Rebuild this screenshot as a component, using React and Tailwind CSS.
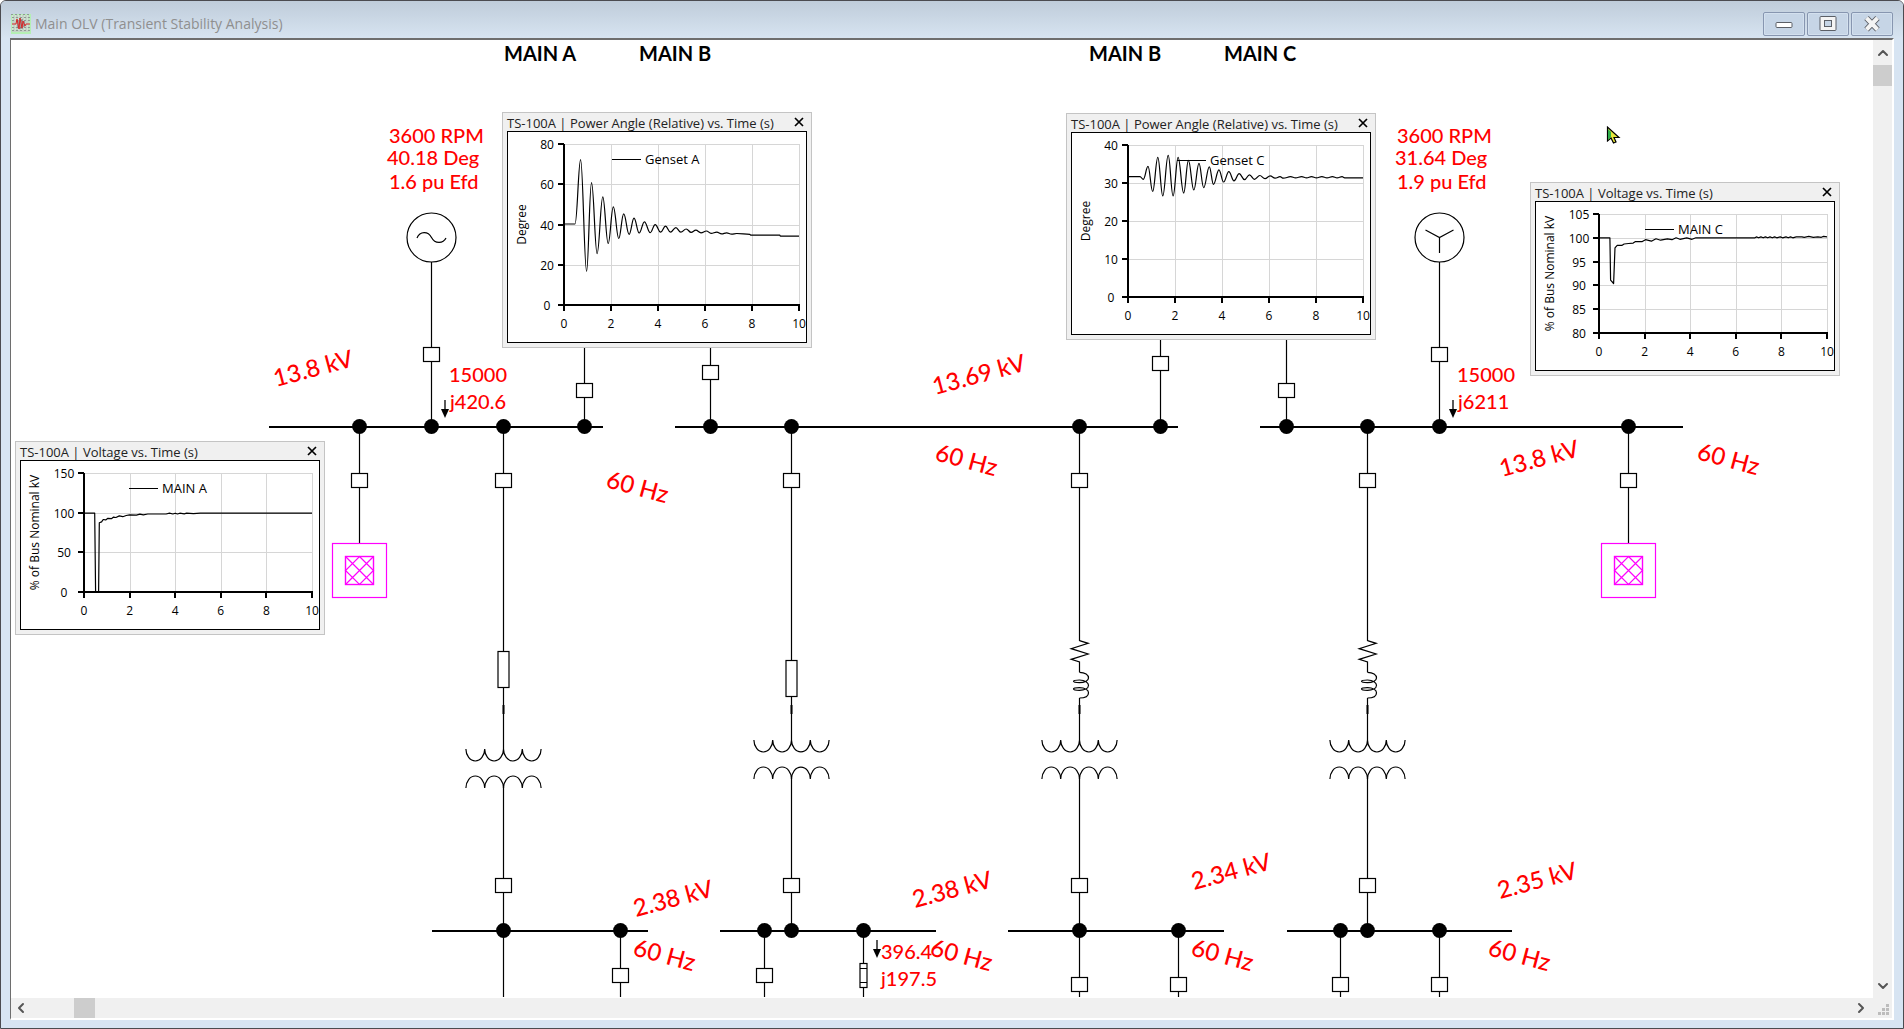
import { ChevronUp, ChevronDown, ChevronLeft, ChevronRight } from 'lucide-react';

const RED = '#ff0000';

// ---- one-line diagram data ----

const buses = [
  { y: 427, x1: 269, x2: 603, taps: [359.5, 431.5, 503.5, 584.5] },
  { y: 427, x1: 675, x2: 1178, taps: [710.5, 791.5, 1079.5, 1160.5] },
  { y: 427, x1: 1260, x2: 1683, taps: [1286.5, 1367.5, 1439.5, 1628.5] },
  { y: 931, x1: 432, x2: 648, taps: [503.5, 620.5] },
  { y: 931, x1: 720, x2: 936, taps: [764.5, 791.5, 863.5] },
  { y: 931, x1: 1008, x2: 1224, taps: [1079.5, 1178.5] },
  { y: 931, x1: 1287, x2: 1512, taps: [1340.5, 1367.5, 1439.5] },
];

const wires = [
  [431.5, 262, 427], [1439.5, 262, 427],
  [584.5, 340, 427], [710.5, 340, 427], [1160.5, 330, 427], [1286.5, 330, 427],
  [359.5, 427, 544], [1628.5, 427, 544],
  [503.5, 931, 997], [620.5, 931, 997], [764.5, 931, 997], [863.5, 931, 997],
  [1079.5, 931, 997], [1178.5, 931, 997], [1340.5, 931, 997], [1439.5, 931, 997],
];

const breakers = [
  [431.5, 354.5], [1439.5, 354.5], [584.5, 390.5], [710.5, 372.5], [1160.5, 363.5], [1286.5, 390.5],
  [359.5, 480.5], [503.5, 480.5], [791.5, 480.5], [1079.5, 480.5], [1367.5, 480.5], [1628.5, 480.5],
  [503.5, 885.5], [791.5, 885.5], [1079.5, 885.5], [1367.5, 885.5],
  [620.5, 975.5], [764.5, 975.5], [1079.5, 984.5], [1178.5, 984.5], [1340.5, 984.5], [1439.5, 984.5],
];

const headings = [
  ['MAIN A', 504, 61], ['MAIN B', 639, 61], ['MAIN B', 1089, 61], ['MAIN C', 1224, 61],
];

const readings = [
  ['3600 RPM', 389, 143], ['40.18 Deg', 387, 165], ['1.6 pu Efd', 389, 189],
  ['3600 RPM', 1397, 143], ['31.64 Deg', 1395, 165], ['1.9 pu Efd', 1397, 189],
  ['15000', 449, 382], ['j420.6', 450, 409],
  ['15000', 1457, 382], ['j6211', 1458, 409],
  ['396.4', 881, 959], ['j197.5', 881, 986],
];

const slanted = [
  ['13.8 kV', 276, 387, -15], ['13.69 kV', 935, 395, -15], ['13.8 kV', 1502, 477, -15],
  ['2.38 kV', 636, 917, -15], ['2.38 kV', 915, 908, -15], ['2.34 kV', 1194, 890, -15], ['2.35 kV', 1500, 899, -15],
  ['60 Hz', 605, 487, 15], ['60 Hz', 934, 460, 15], ['60 Hz', 1696, 459, 15],
  ['60 Hz', 632, 955, 15], ['60 Hz', 929, 955, 15], ['60 Hz', 1190, 955, 15], ['60 Hz', 1487, 955, 15],
];

// ---- plot data: [seconds, value] turning points ----

const gensetA = [
  [0, 40.5], [0.47, 40.5], [0.706, 72.5], [0.96, 17], [1.17, 61], [1.41, 25.8], [1.65, 54], [1.88, 30.8],
  [2.1, 49], [2.33, 33.3], [2.54, 45.5], [2.77, 35.4], [2.98, 43.4], [3.2, 36], [3.42, 41.6], [3.67, 36.2],
  [3.88, 40.2], [4.11, 36.4], [4.32, 39.4], [4.53, 36.4], [4.76, 38.7], [4.97, 36.4], [5.2, 38], [5.41, 36.3],
  [5.61, 37.4], [5.83, 36.1], [6.06, 37], [6.26, 35.9], [6.5, 36.4], [6.71, 35.6], [6.92, 36.1], [7.13, 35.5],
  [7.35, 35.8], [7.91, 35.4], [7.94, 35], [9.18, 35], [9.21, 34.5], [10, 34.5],
];

const gensetC = [
  [0, 31.8], [0.51, 31.8], [0.65, 31.1], [0.85, 34.5], [1.05, 27.9], [1.27, 36.9], [1.48, 26.7], [1.71, 37.4],
  [1.92, 26.7], [2.13, 36.9], [2.37, 27.5], [2.57, 36.1], [2.8, 28.3], [3.02, 35.3], [3.22, 28.9], [3.46, 34.4],
  [3.64, 29.8], [3.87, 33.6], [4.07, 30.4], [4.29, 33.1], [4.51, 30.7], [4.73, 32.6], [4.96, 31], [5.17, 32.3],
  [5.38, 31.1], [5.61, 32.1], [5.83, 31.3], [6.05, 32], [6.26, 31.4], [6.47, 31.8], [6.61, 31.4], [6.92, 31.8],
  [7.13, 31.5], [7.39, 31.8], [7.6, 31.5], [7.81, 31.8], [8.02, 31.5], [8.25, 31.8], [8.47, 31.5], [8.7, 31.8],
  [8.9, 31.5], [9.11, 31.8], [9.22, 31.5], [10, 31.5],
];

const mainA = [
  [0, 100], [0.47, 100], [0.51, 0.5], [0.64, 0.5], [0.67, 88], [0.77, 89], [0.84, 92], [0.95, 91.5], [1.05, 93.5],
  [1.2, 93], [1.3, 95], [1.4, 94.5], [1.55, 96.5], [1.7, 95.5], [1.85, 97], [2, 98], [2.3, 97.5], [2.45, 98.8],
  [2.6, 98], [2.8, 99], [3.6, 99], [3.75, 100], [3.9, 99], [4, 100], [4.1, 99], [4.2, 100], [4.4, 99.2],
  [4.5, 100], [4.8, 99.4], [5.1, 100], [10, 100],
];

const mainC = [
  [0, 100.1], [0.48, 100.1], [0.51, 91.2], [0.64, 90.5], [0.7, 98], [0.8, 98.5], [1, 98.5], [1.1, 98.8], [1.3, 98.9],
  [1.5, 99], [1.6, 99.3], [1.9, 99.3], [2.04, 99.7], [2.3, 99.4], [2.5, 99.9], [2.7, 99.6], [3, 99.9], [3.2, 99.7],
  [3.38, 100.1], [3.55, 99.8], [3.85, 100.1], [4.08, 99.8], [4.25, 100.1], [6.84, 100.1], [6.9, 100.3],
  [7, 100.1], [7.1, 100.3], [7.2, 100.1], [7.3, 100.3], [7.4, 100.1], [7.5, 100.3], [7.6, 100.1], [7.7, 100.3],
  [7.8, 100.1], [7.95, 100.3], [8.05, 100.1], [8.2, 100.3], [8.3, 100.1], [8.4, 100.3], [8.5, 100.1], [8.65, 100.3],
  [8.9, 100.3], [9, 100.2], [9.2, 100.4], [9.4, 100.2], [9.6, 100.3], [9.75, 100.2], [9.85, 100.4], [10, 100.3],
];

function PlotWindow({ title, place, height, left, bottom, min, max, step, axis, legend, legendX, data, smooth }) {
  const top = 13;
  const right = 292;
  const px = t => left + (t / 10) * (right - left);
  const py = v => bottom - ((v - min) / (max - min)) * (bottom - top);
  const yTicks = [];
  for (let v = min; v <= max; v += step) yTicks.push(v);
  const xTicks = [0, 2, 4, 6, 8, 10];
  const mid = (top + bottom) / 2;

  const d = data.map(([t, v], i) => {
    const x = px(t).toFixed(1);
    const y = (py(v) + 0.5).toFixed(1);
    if (i === 0) return `M${x} ${y}`;
    if (!smooth) return `L${x} ${y}`;
    const [pt, pv] = data[i - 1];
    const gap = (px(t) - px(pt)) * 0.4;
    return `C${(px(pt) + gap).toFixed(1)} ${(py(pv) + 0.5).toFixed(1)} ${(px(t) - gap).toFixed(1)} ${y} ${x} ${y}`;
  }).join('');

  return (
    <section className={`absolute w-[310px] border border-[#c4c4c4] bg-[#f0f0f0] px-1 pb-1 ${place}`}>
      <header className="flex h-[18px] items-center justify-between">
        <h2 className="whitespace-nowrap pt-[2px] text-[13px] leading-4 text-[#222222]">{title}</h2>
        <button aria-label="Close plot" className="flex h-4 w-4 items-center justify-center">
          <svg width="10" height="10" viewBox="0 0 10 10">
            <path d="M1 1L9 9M9 1L1 9" stroke="#000" strokeWidth="1.7" />
          </svg>
        </button>
      </header>
      <div className="border border-black bg-white">
        <svg width="298" height={height - 2} viewBox={`1 1 298 ${height - 2}`} className="block text-[12px]">
          <g stroke="#d6d6d6" shapeRendering="crispEdges">
            {yTicks.map(v => <path key={v} d={`M${left} ${Math.round(py(v)) + 0.5}H${right}`} />)}
            {xTicks.map(t => <path key={t} d={`M${Math.round(px(t)) + 0.5} ${top}V${bottom}`} />)}
          </g>
          <path d={d} fill="none" stroke="#000" strokeWidth="1.2" strokeLinejoin="round" />
          <g stroke="#000" strokeWidth="2" shapeRendering="crispEdges">
            <path d={`M${left} ${top}V${bottom + 1}`} />
            <path d={`M${left} ${bottom}H${right + 1}`} />
            {yTicks.map(v => <path key={v} d={`M${left - 6} ${Math.round(py(v))}H${left}`} />)}
            {xTicks.map(t => <path key={t} d={`M${Math.round(px(t))} ${bottom}v6`} />)}
          </g>
          <path d={`M${legendX} 28.5h29`} stroke="#000" />
          <text x={legendX + 33} y="33" className="text-[13px]">{legend}</text>
          <g textAnchor="middle">
            {yTicks.map(v => <text key={v} x={max > 99 ? left - 20 : left - 17} y={py(v) + 5}>{v}</text>)}
            {xTicks.map(t => <text key={t} x={px(t)} y={bottom + 23}>{t}</text>)}
            <text transform={`translate(19 ${mid}) rotate(-90)`}>{axis}</text>
          </g>
        </svg>
      </div>
    </section>
  );
}

function Transformer({ x, y }) {
  const left = x - 37.6;
  return (
    <g>
      <path d={`M${left} ${y}${'a9.4 12 0 0 0 18.8 0'.repeat(4)}`} />
      <path d={`M${left} ${y + 39}${'a9.4 12 0 0 1 18.8 0'.repeat(4)}`} />
      <path d={`M${x} ${y + 38}V931`} />
      <path d={`M${x} 427V${y}`} />
      <path d={`M${x} 705v9`} strokeWidth="2" />
    </g>
  );
}

function Reactor({ x }) {
  return (
    <g>
      <path d={`M${x} 641V698`} stroke="#fff" strokeWidth="3" />
      <g transform={`translate(${x} 600) scale(.3333) translate(-238 0)`} strokeWidth="3.6">
        <path d="M238 122L264 130L213 146L264 162L213 178L238 186V217" />
        <path d="M238 217C255 217 265 225 265 234C265 243 252 248 238 248C228 248 220 246 220 244C220 241 229 240 238 240C255 240 265 248 265 256C265 266 252 271 238 271C228 271 220 269 220 267C220 264 229 263 238 263C255 263 265 270 265 278C265 289 255 294 238 294" />
      </g>
    </g>
  );
}

function Grid({ x }) {
  return (
    <g stroke="#ff00ff" transform={`translate(${x} 570.5)`}>
      <rect x="-27" y="-27" width="54" height="54" />
      <rect x="-14" y="-14" width="28" height="28" strokeWidth="1.4" />
      <path d="M-14 -14L14 14M14 -14L-14 14M0 -14L14 0L0 14L-14 0Z" strokeWidth="1.2" />
    </g>
  );
}

function FlowArrow({ x, y }) {
  return (
    <g transform={`translate(${x} ${y})`}>
      <path d="M0 0V10" strokeWidth="1.3" />
      <path d="M-4 9H4L0 18Z" fill="#000" stroke="none" />
    </g>
  );
}

function OneLineDiagram() {
  return (
    <svg width="1862" height="958" viewBox="11 40 1862 958" className="block max-w-none font-['Lato',sans-serif]">
      <g fill="none" stroke="#000" strokeWidth="1.2">
        {wires.map(([x, y1, y2]) => <path key={`${x}-${y1}`} d={`M${x} ${y1}V${y2}`} />)}
        <Transformer x={503.5} y={749} />
        <Transformer x={791.5} y={740} />
        <Transformer x={1079.5} y={740} />
        <Transformer x={1367.5} y={740} />
        <rect x="498" y="651.5" width="11" height="36" fill="#fff" />
        <rect x="786" y="660.5" width="11" height="36" fill="#fff" />
        <Reactor x={1079.5} />
        <Reactor x={1367.5} />
        {breakers.map(([x, y]) => (
          <rect key={`${x}-${y}`} x={x - 8} y={y - 7} width="16" height="14" fill="#fff" />
        ))}
        <rect x="860" y="963.5" width="7" height="24" fill="#fff" />
        <path d="M860 968.5h7M860 982.5h7" />

        <circle cx="431.5" cy="237.5" r="24.5" fill="#fff" />
        <path d="M417 238C420 231 428 231 431.5 237.5C435 244 443 244 446 238" />
        <circle cx="1439.5" cy="237.5" r="24.5" fill="#fff" />
        <path d="M1425.5 230L1439.5 237.5L1453.5 230M1439.5 237.5V253" />

        <Grid x={359.5} />
        <Grid x={1628.5} />
        <FlowArrow x={445} y={400} />
        <FlowArrow x={1453} y={400} />
        <FlowArrow x={877} y={940} />
      </g>

      {buses.map(bus => (
        <g key={`${bus.x1}-${bus.y}`}>
          <path d={`M${bus.x1} ${bus.y}H${bus.x2}`} stroke="#000" strokeWidth="2" />
          {bus.taps.map(x => <circle key={x} cx={x} cy={bus.y - 0.5} r="7.4" />)}
        </g>
      ))}

      <g className="text-[20px] font-bold">
        {headings.map(([label, x, y]) => <text key={x} x={x} y={y}>{label}</text>)}
      </g>
      <g fill={RED} className="text-[20px] font-medium">
        {readings.map(([label, x, y]) => <text key={`${x}-${y}`} x={x} y={y}>{label}</text>)}
      </g>
      <g fill={RED} className="text-[24px] font-medium">
        {slanted.map(([label, x, y, angle]) => (
          <text key={`${x}-${y}`} transform={`translate(${x} ${y}) rotate(${angle})`}>{label}</text>
        ))}
      </g>

      {/* mouse pointer */}
      <g transform="translate(1607 126)">
        <path d="M.5 1V15L4 12L6.5 17L9 16L7 11.5H12Z" fill="#e6e63c" stroke="#000" strokeWidth="1.2" />
        <path d="M1 3V14L4 11V6Z" fill="#2fae4a" />
      </g>
    </svg>
  );
}

function AppIcon() {
  return (
    <svg width="20" height="20" viewBox="0 0 20 20">
      <rect width="20" height="20" fill="#b4efb4" />
      <rect x="1" y="1" width="17" height="17" fill="#c3d3c6" />
      <path d="M0 .5H20M1 3.5H19M1 6.5H19M1 13.5H19M1 16.5H19" stroke="#8f9a93" strokeDasharray="2 2" />
      <path d="M1 2H19M1 5H19M1 12H19M1 15H19" stroke="#e4f3e4" strokeDasharray="1 2" />
      <path d="M7 6V14M9 4V15M11 5V15M13 7V13" stroke="#7d5f63" strokeWidth="1" />
      <path d="M1 10H5L6 5L8 15L9 4L11 14L12 7L14 12L15 10H19" fill="none" stroke="#d62a2a" />
    </svg>
  );
}

const frameButton = 'flex h-6 w-[42px] items-center justify-center rounded-xs border border-[#8796b0] bg-[#c6d5e6] shadow-[inset_0_0_0_1px_#d3e0ee]';

function TitleBar() {
  return (
    <header className="flex h-[37px] items-center justify-between bg-linear-to-b from-[#bfccda] to-[#d7e4f1] pr-[10px] pl-[10px]">
      <div className="flex items-center gap-1 pt-2">
        <AppIcon />
        <h1 className="text-[14px] leading-5 text-[#8f8f8f]">Main OLV (Transient Stability Analysis)</h1>
      </div>
      <div className="flex gap-[2px] pt-2">
        <button aria-label="Minimize" className={frameButton}>
          <svg width="18" height="18" viewBox="0 0 18 18">
            <rect x="1" y="7.500" width="16" height="5" rx="1" fill="#fff" stroke="#5b5f66" />
          </svg>
        </button>
        <button aria-label="Restore" className={frameButton}>
          <svg width="18" height="18" viewBox="0 0 18 18">
            <rect x="1" y="1.500" width="16" height="14" rx="1" fill="#f4f4f4" stroke="#5b5f66" />
            <rect x="5.500" y="5.500" width="7" height="6" fill="#c6d5e6" stroke="#5b5f66" />
          </svg>
        </button>
        <button aria-label="Close" className={frameButton}>
          <svg width="18" height="18" viewBox="0 0 18 18">
            <path d="M3.500 3L14.500 14.500M14.500 3L3.500 14.500" stroke="#5b5f66" strokeWidth="6" />
            <path d="M3.500 3L14.500 14.500M14.500 3L3.500 14.500" stroke="#f4f4f4" strokeWidth="4" />
          </svg>
        </button>
      </div>
    </header>
  );
}

function VerticalScroll() {
  return (
    <div className="flex w-[19px] flex-col items-center bg-[#f0f0f0]">
      <button aria-label="Scroll up" className="flex h-[25px] items-center">
        <ChevronUp size={16} color="#555" strokeWidth={3} />
      </button>
      <div className="h-[21px] w-full bg-[#cdcdcd]" />
      <button aria-label="Scroll down" className="mt-auto flex h-6 items-center">
        <ChevronDown size={16} color="#555" strokeWidth={3} />
      </button>
    </div>
  );
}

function HorizontalScroll() {
  return (
    <div className="flex h-5 items-center bg-[#f0f0f0]">
      <button aria-label="Scroll left" className="flex w-5 justify-center">
        <ChevronLeft size={16} color="#555" strokeWidth={3} />
      </button>
      <div className="ml-[43px] h-full w-[21px] bg-[#cdcdcd]" />
      <button aria-label="Scroll right" className="ml-auto flex w-6 justify-center">
        <ChevronRight size={16} color="#555" strokeWidth={3} />
      </button>
      <div className="flex h-full w-[19px] items-end justify-end p-[3px]">
        <svg width="11" height="11" viewBox="0 0 11 11" fill="#bcbcbc">
          <path d="M8 0h3v3h-3zM4 4h3v3h-3zM8 4h3v3h-3zM0 8h3v3h-3zM4 8h3v3h-3zM8 8h3v3h-3z" />
        </svg>
      </div>
    </div>
  );
}

export default function App() {
  return (
    <div className="flex h-screen flex-col overflow-hidden rounded-t-md border border-[#4b4b50] bg-[#d7e4f2] font-['Open_Sans','Noto_Sans',sans-serif]">
      <TitleBar />
      <main className="mr-[9px] mb-[8px] ml-[9px] flex min-h-0 flex-1 flex-col border-t-2 border-r-2 border-b-2 border-l border-t-[#6e6e6e] border-r-white border-b-white border-l-[#6e6e6e] bg-white">
        <div className="flex min-h-0 flex-1">
          <div className="relative min-w-0 flex-1 overflow-hidden bg-white">
            <OneLineDiagram />
            <PlotWindow
              title="TS-100A | Power Angle (Relative) vs. Time (s)"
              place="left-[491px] top-[72px]"
              height={212} left={57} bottom={174} min={0} max={80} step={20}
              axis="Degree" legend="Genset A" legendX={105} data={gensetA} smooth
            />
            <PlotWindow
              title="TS-100A | Power Angle (Relative) vs. Time (s)"
              place="left-[1055px] top-[73px]"
              height={203} left={57} bottom={165} min={0} max={40} step={10}
              axis="Degree" legend="Genset C" legendX={106} data={gensetC} smooth
            />
            <PlotWindow
              title="TS-100A | Voltage vs. Time (s)"
              place="left-[1519px] top-[142px]"
              height={170} left={64} bottom={132} min={80} max={105} step={5}
              axis="% of Bus Nominal kV" legend="MAIN C" legendX={110} data={mainC}
            />
            <PlotWindow
              title="TS-100A | Voltage vs. Time (s)"
              place="left-[4px] top-[401px]"
              height={170} left={64} bottom={132} min={0} max={150} step={50}
              axis="% of Bus Nominal kV" legend="MAIN A" legendX={109} data={mainA}
            />
          </div>
          <VerticalScroll />
        </div>
        <HorizontalScroll />
      </main>
    </div>
  );
}
